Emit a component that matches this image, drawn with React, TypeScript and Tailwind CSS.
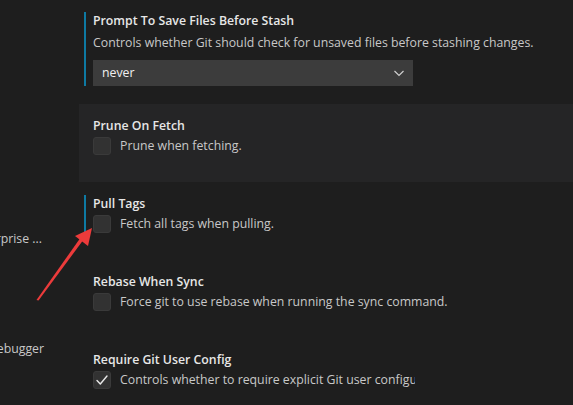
import React from 'react'

const font = { fontFamily: '"Open Sans", "Noto Sans", sans-serif' }

type BoolSetting = {
  title: string
  label: string
  checked?: boolean
  focused?: boolean
  shaded?: boolean
  clipped?: boolean
}

const boolSettings: BoolSetting[] = [
  { title: 'Prune On Fetch', label: 'Prune when fetching.', shaded: true },
  { title: 'Pull Tags', label: 'Fetch all tags when pulling.', focused: true },
  { title: 'Rebase When Sync', label: 'Force git to use rebase when running the sync command.' },
  {
    title: 'Require Git User Config',
    label: 'Controls whether to require explicit Git user configuration.',
    checked: true,
    clipped: true,
  },
]

function Checkbox({ checked }: { checked?: boolean }) {
  return (
    <div className="w-[18px] h-[18px] shrink-0 rounded-[3px] bg-[#323232] border border-[#3a3a3a] flex items-center justify-center">
      {checked && (
        <svg width="14" height="14" viewBox="0 0 14 14" fill="none">
          <path d="M2 7.5 L5.3 11 L12 3" stroke="#e8e8e8" strokeWidth="1.4" strokeLinecap="round" strokeLinejoin="round" />
        </svg>
      )}
    </div>
  )
}

function BoolRow({ s }: { s: BoolSetting }) {
  return (
    <div className={`h-[78px] pl-[5px] pt-[13px] ${s.shaded ? 'bg-[#252526]' : ''}`}>
      <div className={`border-l-2 pl-[7px] ${s.focused ? 'border-[#0e7aa3]' : 'border-transparent'}`}>
        <div className="text-[12.3px] leading-[18px] font-semibold text-[#e7e7e7]">{s.title}</div>
        <div className="mt-[2px] flex items-center gap-[9px]">
          <Checkbox checked={s.checked} />
          <div
            className={`whitespace-nowrap text-[12.3px] leading-[18px] text-[#c8c8c8] ${s.clipped ? 'w-[295px] overflow-hidden' : ''}`}
          >
            {s.label}
          </div>
        </div>
      </div>
    </div>
  )
}

export default function App() {
  return (
    <div className="relative w-[573px] h-[405px] overflow-hidden bg-[#1e1e1e] flex" style={font}>
      {/* table of contents, cut off on the left */}
      <div className="w-[79px] shrink-0 overflow-hidden text-[12.3px] leading-[22px] text-[#c8c8c8]">
        <div className="mt-[228px] pr-[37px] flex justify-end whitespace-nowrap">GitHub Enterprise ...</div>
        <div className="mt-[88px] pr-[35px] flex justify-end whitespace-nowrap">JavaScript Debugger</div>
      </div>

      <div className="flex-1">
        <div className="pl-[5px] pt-[14px] pb-[18px]">
          <div className="border-l-2 border-[#0e7aa3] pl-[7px]">
            <div className="-mt-[2px] text-[12.3px] leading-[18px] font-semibold text-[#e7e7e7]">
              Prompt To Save Files Before Stash
            </div>
            <div className="mt-[4px] text-[12.3px] leading-[18px] text-[#c8c8c8] whitespace-nowrap">
              Controls whether Git should check for unsaved files before stashing changes.
            </div>
            <div className="mt-[8px] w-[320px] h-[26px] bg-[#3c3c3c] flex items-center justify-between pl-[9px] pr-[8px]">
              <span className="text-[12.3px] text-[#f0f0f0]">never</span>
              <svg width="12" height="12" viewBox="0 0 12 12" fill="none">
                <path d="M1.5 4 L6 8.5 L10.5 4" stroke="#cfcfcf" strokeWidth="1.2" />
              </svg>
            </div>
          </div>
        </div>
        {boolSettings.map((s) => (
          <BoolRow key={s.title} s={s} />
        ))}
      </div>

      {/* annotation arrow */}
      <svg className="absolute left-0 top-0 pointer-events-none" width="573" height="405" viewBox="0 0 573 405">
        <polygon points="36.5,300 38.5,300.5 84,239 81,237" fill="#ec3b3b" />
        <polygon points="92,228 75,236 88,246" fill="#ec3b3b" />
      </svg>
    </div>
  )
}
